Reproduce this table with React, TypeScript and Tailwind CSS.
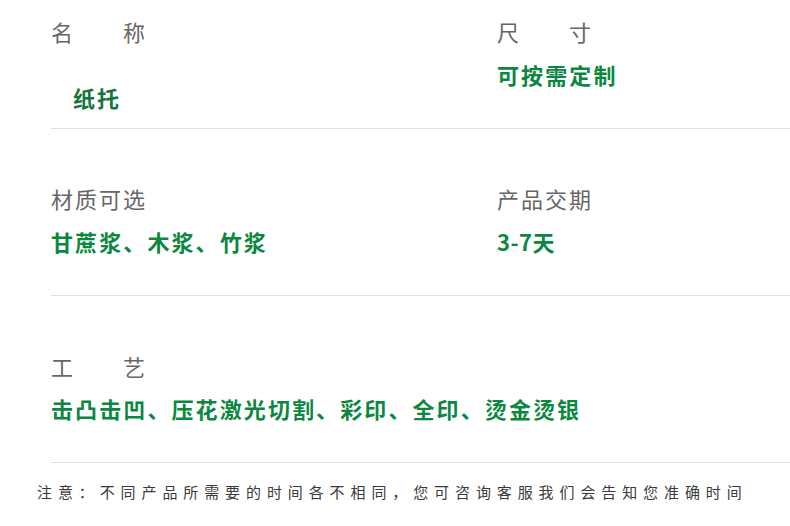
const labelCls =
  "text-[22px] leading-[24px] tracking-[2px] text-[#666666] whitespace-pre";
const valueCls =
  "text-[22px] leading-[24px] font-bold text-[#0b873f] whitespace-pre";

function Field({
  label,
  value,
  valueClass = "",
}: {
  label: string;
  value: string;
  valueClass?: string;
}) {
  return (
    <div className="flex flex-col">
      <div className={labelCls}>{label}</div>
      <div className={`${valueCls} ${valueClass}`}>{value}</div>
    </div>
  );
}

export default function App() {
  return (
    <div
      className="w-[790px] h-[526px] bg-white overflow-hidden"
      style={{ fontFamily: '"Noto Sans CJK SC", "Noto Sans", sans-serif' }}
    >
      <div className="ml-[51px]">
        {/* Row 1 */}
        <div className="h-[129px] border-b border-[#cfe9e2] grid grid-cols-[446px_1fr] pt-[19px]">
          <div className="flex flex-col">
            <div className={labelCls}>名　　称</div>
            <div className={`${valueCls} tracking-[2.1px] mt-[42px] ml-[22px] text-[#17733f]`}>纸托</div>
          </div>
          <div className="flex flex-col">
            <div className={labelCls}>尺　　寸</div>
            <div className={`${valueCls} tracking-[2.1px] mt-[19px]`}>可按需定制</div>
          </div>
        </div>

        {/* Row 2 */}
        <div className="h-[167px] border-b border-[#cfe9e2] grid grid-cols-[446px_1fr] pt-[57px]">
          <Field label="材质可选" value="甘蔗浆、木浆、竹浆" valueClass="mt-[19px] tracking-[2.1px]" />
          <Field label="产品交期" value="3-7天" valueClass="mt-[19px] tracking-[0.5px]" />
        </div>

        {/* Row 3 */}
        <div className="h-[167px] border-b border-[#cfe9e2] pt-[58px]">
          <Field
            label="工　　艺"
            value="击凸击凹、压花激光切割、彩印、全印、烫金烫银"
            valueClass="mt-[18px] tracking-[2.1px]"
          />
        </div>
      </div>

      {/* Note */}
      <div className="pl-[37px] pt-[19px] text-[15px] leading-[20px] tracking-[5.9px] text-[#3a3a3a] whitespace-nowrap">
        注意：不同产品所需要的时间各不相同，您可咨询客服我们会告知您准确时间
      </div>
    </div>
  );
}
